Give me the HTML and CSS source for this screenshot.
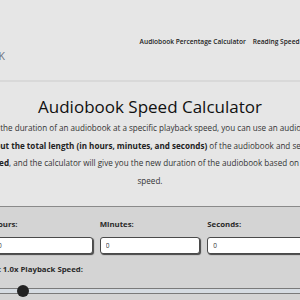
FILE: index.html
```html
<!DOCTYPE html>
<html lang="en">
<head>
    <meta charset="UTF-8">
    <title>Audiobook Speed Calculator</title>
    <link rel="stylesheet" href="styles.css">
</head>
<body>
    <div class="page">
        <header class="site-header">
            <a href="#" class="logo">AUDIOBOOK</a>
            <nav class="nav">
                <a href="#">Audiobook Percentage Calculator</a>
                <a href="#">Reading Speed Calculator</a>
                <a href="#">About</a>
            </nav>
        </header>

        <main class="main">
            <h1>Audiobook Speed Calculator</h1>
            <p class="intro">
                If you'd like to find out the duration of an audiobook at a specific playback speed, you can use an audiobook speed calculator.<br>
                Just <strong>input the total length (in hours, minutes, and seconds)</strong> of the audiobook and select the<br>
                <strong>desired speed</strong>, and the calculator will give you the new duration of the audiobook based on the selected<br>
                speed.
            </p>

            <div class="calculator">
                <div class="time-fields">
                    <div class="field">
                        <label for="hours">Hours:</label>
                        <input type="text" id="hours" value="0">
                    </div>
                    <div class="field">
                        <label for="minutes">Minutes:</label>
                        <input type="text" id="minutes" value="0">
                    </div>
                    <div class="field">
                        <label for="seconds">Seconds:</label>
                        <input type="text" id="seconds" value="0">
                    </div>
                </div>
                <label class="speed-label" for="speed">At 1.0x Playback Speed:</label>
                <input type="range" id="speed" class="speed-slider" min="0.5" max="3.5" step="0.05" value="0.75">
            </div>
        </main>
    </div>
</body>
</html>
```

FILE: styles.css
```css
body {
    font-family: 'Open Sans', 'Noto Sans', sans-serif;
    margin: 0;
    padding: 0;
    background: #e6e6e6;
    color: #222;
    overflow: hidden;
}

.page {
    display: flex;
    flex-direction: column;
    align-items: center;
}

.site-header {
    width: 420px;
    display: flex;
    align-items: flex-start;
    padding: 37px 14px 0;
    height: 43px;
    border-bottom: 2px solid #d9d9d9;
    box-sizing: content-box;
}

.logo {
    margin-top: 12px;
    font-size: 10.5px;
    color: #6b7280;
    text-decoration: none;
    letter-spacing: 0.3px;
}

.nav {
    margin-left: auto;
    display: flex;
    gap: 7px;
}

.nav a {
    font-size: 6.6px;
    font-weight: 600;
    color: #222;
    text-decoration: none;
}

.main {
    width: 340px;
    display: flex;
    flex-direction: column;
    align-items: center;
}

h1 {
    margin: 14px 0 0;
    font-size: 17px;
    font-weight: 400;
    line-height: 22px;
    color: #111;
    white-space: nowrap;
}

.intro {
    margin: 1px 0 17px;
    font-size: 8.1px;
    line-height: 17.5px;
    color: #333;
    text-align: center;
    white-space: nowrap;
}

.intro strong {
    font-weight: 700;
    color: #222;
}

.calculator {
    align-self: stretch;
    background: #d4d4d4;
    border-top: 1px solid #8a8a8a;
    padding: 12px 12px 20px;
}

.time-fields {
    display: grid;
    grid-template-columns: repeat(3, 1fr);
    gap: 7px;
}

.field {
    display: flex;
    flex-direction: column;
    gap: 8px;
}

.field label,
.speed-label {
    font-size: 7.8px;
    font-weight: 700;
    line-height: 10px;
    color: #2a2a2a;
}

.field input {
    height: 17px;
    box-sizing: border-box;
    border: 1px solid #4a4a4a;
    border-radius: 3px;
    box-shadow: 1px 1px 1px #444;
    background: #fff;
    padding: 0 5px;
    font-family: inherit;
    font-size: 6.5px;
    color: #333;
}

.speed-label {
    display: block;
    margin-top: 10px;
}

.speed-slider {
    -webkit-appearance: none;
    appearance: none;
    display: block;
    width: 100%;
    height: 12px;
    margin: 11px 0 0;
    background: transparent;
}

.speed-slider::-webkit-slider-runnable-track {
    height: 6px;
    background: #d6dce2;
    border-top: 1px solid #7a7a7a;
    border-bottom: 1px solid #7a7a7a;
    box-sizing: border-box;
}

.speed-slider::-webkit-slider-thumb {
    -webkit-appearance: none;
    width: 12px;
    height: 12px;
    margin-top: -4px;
    border-radius: 50%;
    background: #222;
}
```
